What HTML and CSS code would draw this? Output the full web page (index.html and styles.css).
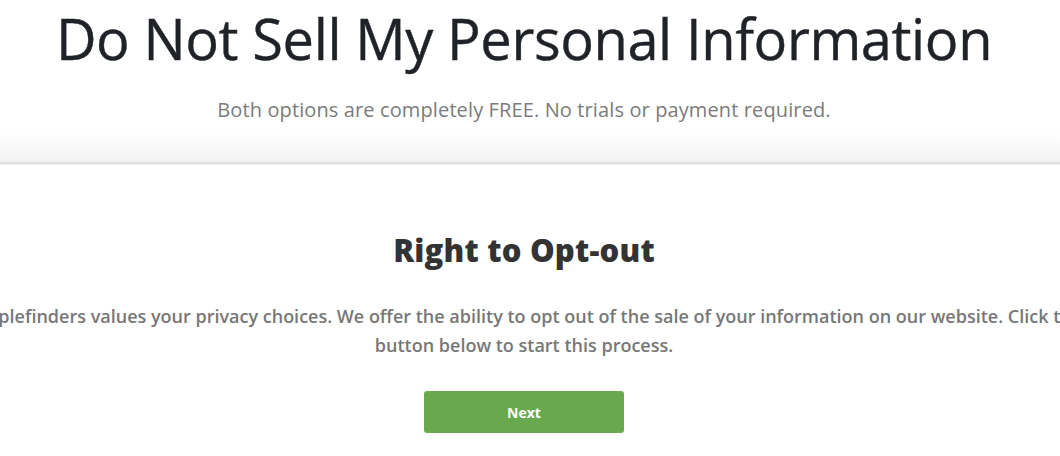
FILE: index.html
```html
<!DOCTYPE html>
<html lang="en">
<head>
<meta charset="utf-8">
<title>Do Not Sell My Personal Information</title>
<link rel="stylesheet" href="styles.css">
</head>
<body>
<div class="page">
  <header class="hero">
    <h1 class="hero-title">Do Not Sell My Personal Information</h1>
    <p class="hero-sub">Both options are completely FREE. No trials or payment required.</p>
  </header>
  <main class="optout">
    <div class="optout-inner">
      <h2 class="optout-title">Right to Opt-out</h2>
      <p class="optout-text">Peoplefinders values your privacy choices. We offer the ability to opt out of the sale of your information on our website. Click the button below to start this process.</p>
      <button class="btn-next" type="button">Next</button>
    </div>
  </main>
</div>
</body>
</html>
```
FILE: styles.css
```css
html, body {
  margin: 0;
  padding: 0;
  background: #ffffff;
}
body {
  font-family: "Open Sans", "Noto Sans", "Liberation Sans", sans-serif;
  overflow: hidden;
}
.page {
  width: 1048px;
}
.hero {
  text-align: center;
  height: 164px;
  box-sizing: border-box;
  background: linear-gradient(to bottom, #ffffff 0, #ffffff 133px, #f2f2f2 162px);
  border-bottom: 2px solid #dfdfdf;
  box-shadow: 0 1px 0 #efefef;
  margin-right: -12px;
  padding-right: 12px;
}
.hero-title {
  margin: 0;
  font-size: 56px;
  font-weight: 400;
  line-height: 76px;
  letter-spacing: -0.4px;
  color: #1f2226;
  -webkit-text-stroke: 0.4px #1f2226;
}
.hero-sub {
  margin: 20px 0 0;
  font-size: 20px;
  line-height: 28px;
  letter-spacing: 0.12px;
  color: #7b7b7b;
}
.optout {
  padding-top: 64px;
}
.optout-inner {
  display: flex;
  flex-direction: column;
  align-items: center;
  margin: 0 -50px;
  text-align: center;
}
.optout-title {
  margin: 0;
  font-size: 31px;
  font-weight: 800;
  line-height: 44px;
  letter-spacing: 0.2px;
  color: #333333;
}
.optout-text {
  margin: 30px 0 0;
  font-size: 18px;
  font-weight: 600;
  line-height: 29px;
  color: #777777;
}
.btn-next {
  margin-top: 31px;
  width: 200px;
  height: 42px;
  border: 0;
  border-radius: 3px;
  background: #68a94f;
  color: #ffffff;
  font-family: inherit;
  font-size: 14px;
  font-weight: 700;
}
```
